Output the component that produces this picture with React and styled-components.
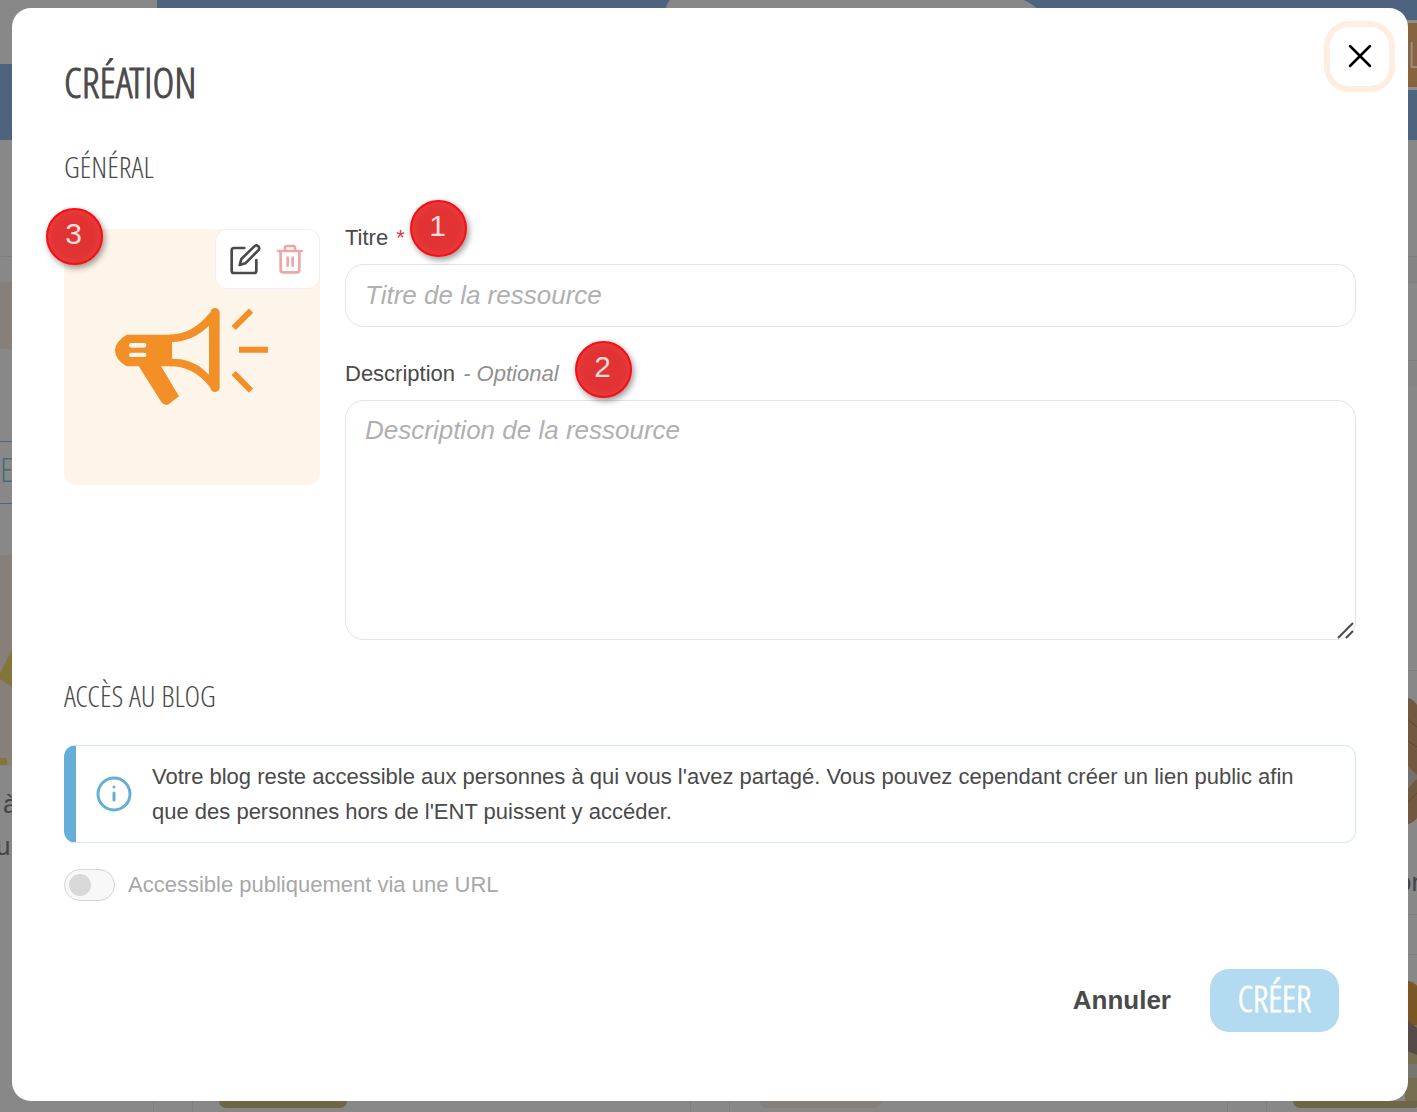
import React from "react";
import styled, { createGlobalStyle } from "styled-components";

const sans = `"Liberation Sans", Arial, sans-serif`;
const display = `"Open Sans Condensed Light", "Open Sans Condensed", "Liberation Sans Narrow", "Liberation Sans", sans-serif`;

const GlobalStyle = createGlobalStyle`
  *, *::before, *::after { box-sizing: border-box; }
  body { margin: 0; background: #888; font-family: ${sans}; color: #4a4a4a; }
  button, input, textarea { font-family: inherit; }
`;

const Page = styled.div`
  position: relative;
  min-height: 100vh;
  overflow: hidden;
  padding: 8px 9px 11px 12px;
`;

const Backdrop = styled.div`
  position: absolute;
  inset: 0;
  display: flex;
  flex-direction: column;
  overflow: hidden;
  background: #888;
`;

const SiteHeader = styled.div`
  height: 140px;
  flex: none;
  display: flex;
  justify-content: space-between;
  background: #4d637e;
`;

const HeaderTab = styled.div`
  width: 157px;
  height: 64px;
  background: #888;
`;

const HeaderNotch = styled.svg`
  width: 380px;
  height: 10px;
  margin-left: 156px;
`;

const HeaderAction = styled.div`
  width: 20px;
  height: 70px;
  margin-top: 20px;
  padding-left: 11px;
  border: solid #928e8a;
  border-width: 3px 0;
  background: #87633f;
  color: #96918b;
  font: 300 36px/64px ${display};
`;

const Columns = styled.div`
  flex: 1;
  display: flex;
  justify-content: space-between;
`;

const Edge = styled.div`
  width: 12px;
`;

const Block = styled.div`
  height: ${(p) => p.$h}px;
  background: ${(p) => p.$bg || "transparent"};
  border-top: ${(p) => (p.$line ? `1px solid ${p.$line}` : "0")};
`;

const EdgeText = styled.div`
  height: 42px;
  padding-left: ${(p) => p.$pad || 0}px;
  text-indent: ${(p) => p.$indent || 0}px;
  white-space: nowrap;
  font-size: 26px;
  line-height: 42px;
  color: #444;
`;

const EdgeButton = styled.div`
  height: 63px;
  border: solid #4c6a7c;
  border-width: 1px 0;
  color: #4c6a7c;
  font: 300 34px/55px ${display};
`;

const EdgeArt = styled.svg`
  display: block;
  width: 12px;
  height: ${(p) => p.$h}px;
`;

const BottomRow = styled.div`
  height: 11px;
  position: absolute;
  inset: auto 0 0 153px;
  display: grid;
  grid-template-columns: 39px 498px 39px 498px 39px 1fr;
`;

const BottomCell = styled.div`
  border-left: 1px solid #7e7e7e;
  padding-left: ${(p) => p.$pad || 0}px;
`;

const Thumb = styled.div`
  width: ${(p) => p.$w}px;
  height: 7px;
  border-radius: 0 0 12px 12px;
  background: ${(p) => p.$bg};
`;

const Dialog = styled.section`
  position: relative;
  padding: 52px 52px 69px;
  border-radius: 19px;
  background: #fff;
`;

const CloseButton = styled.button`
  position: absolute;
  top: 19px;
  right: 19px;
  width: 59px;
  height: 59px;
  display: grid;
  place-items: center;
  padding: 0 0 1px;
  border: 0;
  border-radius: 19px;
  background: #fff;
  box-shadow: 0 0 0 6px #fdeee1;
`;

const Title = styled.h1`
  margin: 0;
  font: 300 42px/44px ${display};
  -webkit-text-stroke: 1px currentColor;
`;

const SectionTitle = styled.h2`
  margin: ${(p) => p.$top}px 0 ${(p) => p.$bottom}px;
  font: 300 30px/34px ${display};
`;

const General = styled.div`
  display: grid;
  grid-template-columns: 256px 1fr;
  gap: 25px;
`;

const Cover = styled.div`
  position: relative;
  height: 256px;
  margin-top: 9px;
  border-radius: 12px;
  background: #fef5ea;
`;

const CoverArt = styled.svg`
  display: block;
  width: 100%;
  height: 100%;
`;

const CoverTools = styled.div`
  position: absolute;
  top: 0;
  right: 0;
  display: flex;
  gap: 13px;
  padding: 13px;
  border: 1px solid #f0f0f2;
  border-radius: 12px;
  background: #fff;
`;

const IconButton = styled.button`
  width: 32px;
  height: 32px;
  padding: 0;
  border: 0;
  background: none;
  color: ${(p) => p.$color};
  svg { display: block; width: 32px; height: 32px; }
`;

const Fields = styled.div`
  display: flex;
  flex-direction: column;
  gap: 29px;
`;

const Field = styled.div`
  position: relative;
  display: flex;
  flex-direction: column;
  gap: 9px;
`;

const Label = styled.label`
  font-size: 22px;
  line-height: 35px;
`;

const Required = styled.span`
  margin-left: 2px;
  color: #e13a3a;
`;

const Optional = styled.em`
  margin-left: 2px;
  color: #909090;
`;

const control = `
  display: block;
  width: 100%;
  border: 1px solid #e4e4e4;
  border-radius: 19px;
  background: #fff;
  color: #4a4a4a;
  font-size: 26px;
  outline: 0;
  &::placeholder { color: #b0b0b0; font-style: italic; opacity: 1; }
`;

const TextInput = styled.input`
  ${control}
  height: 63px;
  padding: 0 19px;
`;

const TextArea = styled.textarea`
  ${control}
  height: 240px;
  padding: 10px 19px;
  line-height: 38px;
  resize: none;
`;

const Grip = styled.svg`
  position: absolute;
  right: 1px;
  bottom: 1px;
  width: 18px;
  height: 18px;
  pointer-events: none;
`;

const Badge = styled.span`
  position: absolute;
  left: ${(p) => p.$left}px;
  top: ${(p) => p.$top}px;
  width: 57px;
  height: 57px;
  display: grid;
  place-items: center;
  padding: 0 2px 5px 0;
  border: 2px solid #fb0d12;
  border-radius: 50%;
  background: #e23334;
  box-shadow: 2px 3px 6px rgba(0, 0, 0, 0.4), inset 0 0 10px rgba(255, 90, 90, 0.4);
  color: #fcdcdc;
  font-size: 30px;
  line-height: 34px;
`;

const Notice = styled.div`
  display: flex;
  align-items: center;
  gap: 20px;
  padding: 13px 20px;
  border: 1px solid #d8e8f0;
  border-left: 12px solid #64aed7;
  border-radius: 12px;
`;

const NoticeIcon = styled.svg`
  flex: none;
  width: 36px;
  height: 36px;
`;

const NoticeText = styled.p`
  margin: 0;
  font-size: 22px;
  line-height: 35px;
`;

const SwitchRow = styled.label`
  display: flex;
  align-items: center;
  gap: 13px;
  margin-top: 24px;
  color: #a8a8a8;
  font-size: 22px;
  line-height: 35px;
`;

const Switch = styled.input`
  appearance: none;
  width: 51px;
  height: 32px;
  margin: 0;
  padding: 4px;
  border: 1px solid #d6d6d6;
  border-radius: 16px;
  background: #f8f8f8;
  &::before {
    content: "";
    display: block;
    width: 22px;
    height: 22px;
    border-radius: 50%;
    background: #d9d9d9;
  }
`;

const Footer = styled.footer`
  display: flex;
  justify-content: flex-end;
  gap: 20px;
  margin-top: 67px;
  padding-right: 17px;
`;

const CancelButton = styled.button`
  height: 63px;
  padding: 0 19px;
  border: 0;
  background: none;
  color: #4a4a4a;
  font-size: 26px;
  font-weight: 700;
`;

const CreateButton = styled.button`
  width: 129px;
  height: 63px;
  padding: 0 0 4px;
  border: 0;
  border-radius: 19px;
  background: #b2daf0;
  color: #fff;
  font: 300 36px/40px ${display};
  -webkit-text-stroke: 1px currentColor;
`;

function Background() {
  return (
    <Backdrop aria-hidden="true">
      <SiteHeader>
        <HeaderTab />
        <HeaderNotch viewBox="0 0 380 10">
          <path d="M5 0H359Q368 4 373 10H0Q1 5 5 0Z" fill="#888" />
        </HeaderNotch>
        <HeaderAction>L</HeaderAction>
      </SiteHeader>
      <Columns>
        <Edge>
          <Block $h={116} />
          <Block $h={26} $line="#7e7e7e" />
          <Block $h={67} $bg="#877f79" />
          <Block $h={92} />
          <EdgeButton>E</EdgeButton>
          <Block $h={51} />
          <EdgeArt $h={210} viewBox="0 0 12 210">
            <path d="M0 0H12V210H0Z" fill="#877f79" />
            <path d="M12 95V132L0 124V118Z" fill="#84753a" />
            <path d="M0 203H7V210H0Z" fill="#84753a" />
          </EdgeArt>
          <Block $h={18} />
          <EdgeText $pad={3}>à</EdgeText>
          <EdgeText $indent={-4}>u</EdgeText>
        </Edge>
        <Edge>
          <Block $h={116} />
          <Block $h={26} $bg="#848484" $line="#7e7e7e" />
          <Block $h={78} $line="#7e7e7e" />
          <Block $h={26} $bg="#858585" $line="#7e7e7e" />
          <Block $h={284} />
          <Block $h={27} $line="#7e7e7e" />
          <EdgeArt $h={128} viewBox="0 0 12 128">
            <path d="M0 0Q9 2 12 8V121Q9 126 0 128Z" fill="#72583f" />
            <path d="M0 66L12 78V82L0 94Z" fill="#73706e" />
            <path d="M0 20L12 30M0 42L12 50M0 108L12 96" stroke="#5c4632" />
          </EdgeArt>
          <Block $h={36} />
          <EdgeText $indent={-8}>on</EdgeText>
          <Block $h={11} />
          <Block $h={40} $line="#7e7e7e" />
          <Block $h={26} $line="#7e7e7e" />
          <EdgeArt $h={126} viewBox="0 0 12 126">
            <path d="M0 0Q9 2 12 6V126H0Z" fill="#776e52" />
            <path d="M0 0Q9 2 12 6V45H0Z" fill="#7b5524" />
            <path d="M0 38L12 48V75L0 70Z" fill="#564b47" />
            <path d="M0 84H12V98H0Z" fill="#777771" />
          </EdgeArt>
        </Edge>
      </Columns>
      <BottomRow>
        <BottomCell />
        <BottomCell $pad={26}><Thumb $w={128} $bg="#6f6648" /></BottomCell>
        <BottomCell />
        <BottomCell $pad={30}><Thumb $w={121} $bg="#877f7b" /></BottomCell>
        <BottomCell />
        <BottomCell $pad={26}><Thumb $w={128} $bg="#6f6648" /></BottomCell>
      </BottomRow>
    </Backdrop>
  );
}

function Megaphone() {
  return (
    <CoverArt viewBox="72 102 768 768" fill="#f28f27" aria-hidden="true">
      <path d="M260 419H396V514H260Q225 494 225 466Q225 440 260 419Z" />
      <path d="M294 510L364 621Q375 636 388 626L417 604L361 510Z" />
      <path
        fillRule="evenodd"
        d="M390 419C438 418 476 395 511 352Q514 339 525 339Q539 340 539 354V577Q539 590 525 591Q514 591 511 578C478 535 438 514 390 514ZM396 441C438 439 474 424 507 392V539C474 504 438 491 396 491Z"
      />
      <rect x="267" y="444" width="52" height="14" rx="7" fill="#fef5ea" />
      <rect x="267" y="473" width="52" height="13" rx="6" fill="#fef5ea" />
      <g stroke="#f28f27" strokeWidth="18">
        <path d="M581 399L633 347M597 464H684M581 534L633 587" />
      </g>
    </CoverArt>
  );
}

export default function App() {
  return (
    <>
      <GlobalStyle />
      <Page>
        <Background />
        <Dialog role="dialog" aria-modal="true" aria-labelledby="dialog-title">
          <CloseButton type="button" aria-label="Fermer">
            <svg width="24" height="24" viewBox="0 0 24 24" fill="none" stroke="#000" strokeWidth="2.5" strokeLinecap="round">
              <path d="M2 2L22 22M22 2L2 22" />
            </svg>
          </CloseButton>

          <Title id="dialog-title">CRÉATION</Title>

          <SectionTitle $top={46} $bottom={36}>GÉNÉRAL</SectionTitle>
          <General>
            <Cover>
              <Megaphone />
              <CoverTools>
                <IconButton type="button" aria-label="Modifier l'image" $color="#4a4a4a">
                  <svg viewBox="566 144 96 96" fill="none" stroke="currentColor" strokeWidth="8" strokeLinecap="round" strokeLinejoin="round">
                    <path d="M612 159H581Q574 159 574 166V227Q574 234 581 234H641Q648 234 648 227V195" />
                    <path d="M598 210L603 192L642 154Q648 148 654 154Q659 160 654 166L615 205Z" />
                  </svg>
                </IconButton>
                <IconButton type="button" aria-label="Supprimer l'image" $color="#eea6a8">
                  <svg viewBox="702 144 96 96" fill="none" stroke="currentColor" strokeWidth="8" strokeLinecap="round" strokeLinejoin="round">
                    <path d="M715 168H785M722 168V225Q722 232 729 232H771Q778 232 778 225V168" />
                    <path d="M735 167V159Q735 153 741 153H759Q765 153 765 159V167M743 188V212M758 188V212" />
                  </svg>
                </IconButton>
              </CoverTools>
              <Badge $left={-18} $top={-21}>3</Badge>
            </Cover>

            <Fields>
              <Field>
                <Label htmlFor="resource-title">
                  Titre <Required>*</Required>
                </Label>
                <TextInput id="resource-title" type="text" placeholder="Titre de la ressource" required />
                <Badge $left={65} $top={-20}>1</Badge>
              </Field>
              <Field>
                <Label htmlFor="resource-description">
                  Description <Optional>- Optional</Optional>
                </Label>
                <TextArea id="resource-description" placeholder="Description de la ressource" />
                <Grip viewBox="0 0 18 18" stroke="#4a4a4a" strokeWidth="2" aria-hidden="true">
                  <path d="M1 17L16 2M9 17L16 10" />
                </Grip>
                <Badge $left={230} $top={-15}>2</Badge>
              </Field>
            </Fields>
          </General>

          <SectionTitle $top={39} $bottom={32}>ACCÈS AU BLOG</SectionTitle>
          <Notice>
            <NoticeIcon viewBox="0 0 36 36" fill="none" stroke="#64aed7" strokeWidth="3" strokeLinecap="round" aria-hidden="true">
              <circle cx="18" cy="18" r="16" />
              <path d="M18 17V24M18 11V11.1" />
            </NoticeIcon>
            <NoticeText>
              Votre blog reste accessible aux personnes à qui vous l'avez partagé. Vous pouvez cependant créer un lien
              public afin que des personnes hors de l'ENT puissent y accéder.
            </NoticeText>
          </Notice>
          <SwitchRow>
            <Switch type="checkbox" role="switch" disabled />
            Accessible publiquement via une URL
          </SwitchRow>

          <Footer>
            <CancelButton type="button">Annuler</CancelButton>
            <CreateButton type="button">CRÉER</CreateButton>
          </Footer>
        </Dialog>
      </Page>
    </>
  );
}
